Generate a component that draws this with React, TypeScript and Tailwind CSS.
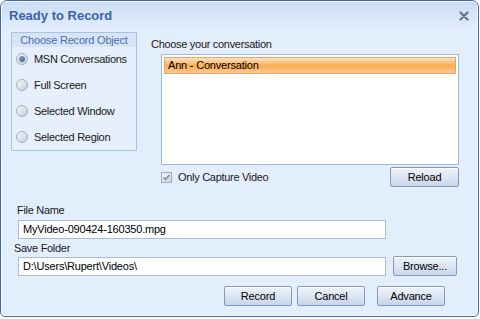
import type { ReactNode } from "react";

const font = { fontFamily: '"Liberation Sans", Arial, sans-serif' };

function Btn({ children, className }: { children: ReactNode; className: string }) {
  return (
    <button
      className={`${className} flex h-[20px] items-center justify-center rounded-[2px] border border-[#8399bb] bg-gradient-to-b from-[#eef3fa] via-[#dde6f3] to-[#c8d5e9] text-[11px] leading-none tracking-[-0.2px] text-black shadow-[inset_0_1px_0_#ffffff]`}
    >
      {children}
    </button>
  );
}

function Radio({ label, checked }: { label: string; checked?: boolean }) {
  return (
    <div className="flex h-[14px] items-center gap-[6px]">
      <span className="flex h-[12px] w-[12px] shrink-0 items-center justify-center rounded-full border border-[#a3adbb] bg-gradient-to-br from-[#f4f6f9] to-[#c9ced6]">
        {checked && (
          <span className="h-[6px] w-[6px] rounded-full bg-gradient-to-br from-[#8fa8cf] to-[#3f5f95]" />
        )}
      </span>
      <span className="whitespace-nowrap text-[11px] leading-[14px] tracking-[-0.3px] text-[#1a1a1a]">{label}</span>
    </div>
  );
}

function Field({ value }: { value: string }) {
  return (
    <div className="flex h-[19px] w-[368px] items-center border border-[#a7bddc] bg-white px-[4px] text-[11px] tracking-[-0.2px] text-black">
      {value}
    </div>
  );
}

const label = "text-[11px] leading-[14px] tracking-[-0.3px] text-[#1a1a1a] whitespace-nowrap";

export default function App() {
  return (
    <div className="h-[319px] w-[480px] bg-white" style={font}>
      <div className="h-[317px] w-[479px] overflow-hidden rounded-t-[7px] rounded-b-[5px] border border-[#49699a] bg-[#e3eefc]">
        <div className="h-full rounded-t-[6px] rounded-b-[4px] border border-[#f4f8fe]">
          {/* title bar */}
          <div className="flex h-[27px] items-center justify-between bg-gradient-to-b from-[#cadcf4] to-[#e3eefc] pl-[7px] pr-[8px]">
            <span className="text-[13px] font-bold text-[#3c62a6]">Ready to Record</span>
            <svg width="10" height="10" viewBox="0 0 10 10">
              <path d="M1.5 1.5 L8.5 8.5 M8.5 1.5 L1.5 8.5" stroke="#6b7687" strokeWidth="2.2" strokeLinecap="round" />
            </svg>
          </div>

          {/* upper section */}
          <div className="mt-[3px] flex">
            <div className="ml-[9px] h-[119px] w-[126px] border border-[#a9c1e2] bg-[#e6effc]">
              <div className="flex h-[14px] items-center justify-center bg-[#d6e4f6] text-[11px] tracking-[-0.2px] whitespace-nowrap text-[#4a6eab]">
                Choose Record Object
              </div>
              <div className="flex flex-col gap-[12px] pl-[4px] pt-[5px]">
                <Radio label="MSN Conversations" checked />
                <Radio label="Full Screen" />
                <Radio label="Selected Window" />
                <Radio label="Selected Region" />
              </div>
            </div>

            <div className="ml-[14px] flex flex-col">
              <span className={`mt-[5px] ${label}`}>Choose your conversation</span>
              <div className="ml-[10px] mt-[3px] h-[111px] w-[298px] border border-[#9db8de] bg-white p-[2px]">
                <div className="flex h-[17px] items-center border border-[#e3a56a] bg-gradient-to-b from-[#ffe2bd] via-[#fbac55] to-[#fcc98f] pl-[3px] text-[11px] tracking-[-0.2px] text-black">
                  Ann - Conversation
                </div>
              </div>
              <div className="ml-[10px] mt-[2px] flex w-[298px] items-center justify-between">
                <div className="flex items-center gap-[6px]">
                  <span className="flex h-[11px] w-[11px] items-center justify-center border border-[#9eabbf] bg-gradient-to-br from-[#eef1f5] to-[#cfd6e0]">
                    <svg width="9" height="9" viewBox="0 0 9 9">
                      <path d="M1.5 4.5 L3.5 6.5 L7.5 2" stroke="#7c889a" strokeWidth="1.4" fill="none" />
                    </svg>
                  </span>
                  <span className={label}>Only Capture Video</span>
                </div>
                <Btn className="w-[69px]">Reload</Btn>
              </div>
            </div>
          </div>

          {/* lower section */}
          <div className="mt-[16px] flex flex-col">
            <span className={`ml-[15px] ${label}`}>File Name</span>
            <div className="ml-[16px] mt-[3px]">
              <Field value="MyVideo-090424-160350.mpg" />
            </div>
            <span className={`ml-[12px] mt-[2px] ${label}`}>Save Folder</span>
            <div className="ml-[16px] mt-[1px] flex items-center gap-[7px]">
              <Field value="D:\Users\Rupert\Videos\" />
              <Btn className="w-[64px]">Browse...</Btn>
            </div>
          </div>

          <div className="mt-[10px] flex pl-[222px]">
            <Btn className="w-[68px]">Record</Btn>
            <Btn className="ml-[5px] w-[68px]">Cancel</Btn>
            <Btn className="ml-[12px] w-[68px]">Advance</Btn>
          </div>
        </div>
      </div>
    </div>
  );
}
